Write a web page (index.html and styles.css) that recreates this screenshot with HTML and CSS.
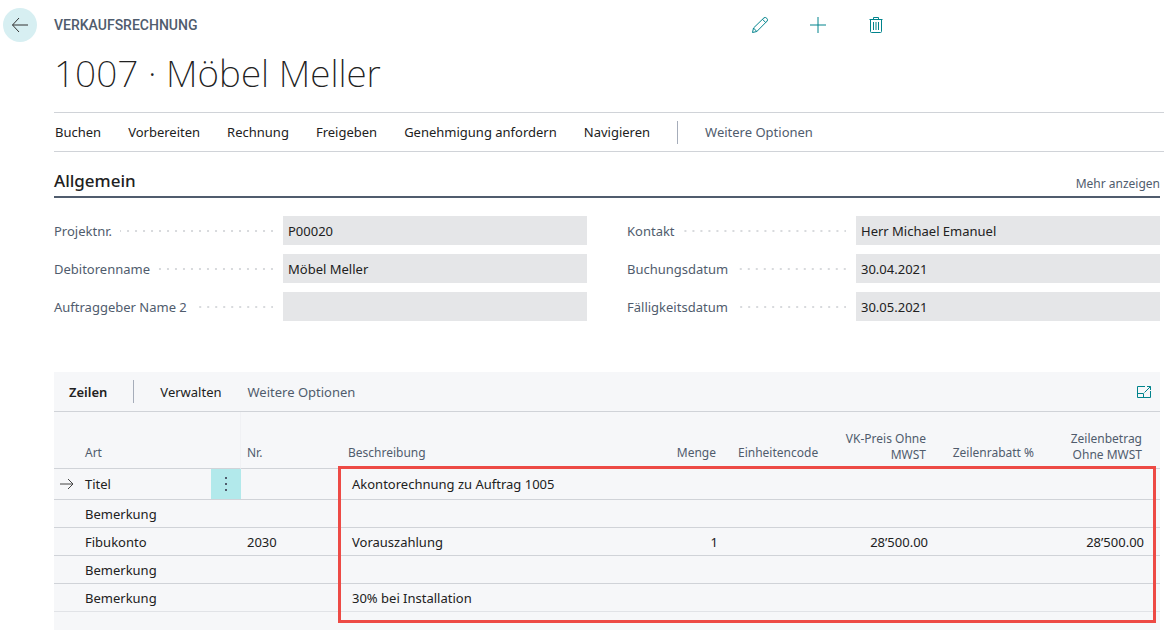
FILE: index.html
```html
<!DOCTYPE html>
<html lang="de">
	<head>
		<meta charset="UTF-8">
		<title>1007 · Möbel Meller - Verkaufsrechnung</title>
		<link rel="stylesheet" href="styles.css">
	</head>
	<body>
		<header class="header">
			<button class="back" type="button" aria-label="Zurück">
				<svg width="18" height="16" viewBox="0 0 18 16"><path d="M17 8H1.500M8 1L1.500 8L8 15"/></svg>
			</button>
			<span class="caption">VERKAUFSRECHNUNG</span>
			<div class="tools">
				<button type="button" aria-label="Bearbeiten">
					<svg width="18" height="18" viewBox="0 0 18 18"><path d="M1.500 16.500L2.500 12L13 1.800Q14.300 0.900 15.800 2.300Q17.100 3.700 16.200 5L5.800 15.500ZM2.500 12L5.800 15.500M11.500 3.300L14.700 6.500"/></svg>
				</button>
				<button type="button" aria-label="Neu">
					<svg width="18" height="18" viewBox="0 0 18 18"><path d="M9 1V17M1 9H17"/></svg>
				</button>
				<button type="button" aria-label="Löschen">
					<svg width="18" height="18" viewBox="0 0 18 18"><path d="M2.500 3.500H15.500M6.500 3.500V1.500H11.500V3.500M3.500 3.500V15.500Q3.500 16.500 4.500 16.500H13.500Q14.500 16.500 14.500 15.500V3.500M6.500 6V14M9 6V14M11.500 6V14"/></svg>
				</button>
			</div>
		</header>
		<main class="content">
			<h1>1007 · Möbel Meller</h1>
			<nav class="actions">
				<button type="button">Buchen</button>
				<button type="button">Vorbereiten</button>
				<button type="button">Rechnung</button>
				<button type="button">Freigeben</button>
				<button type="button">Genehmigung anfordern</button>
				<button type="button">Navigieren</button>
				<span class="divider"></span>
				<button type="button" class="more">Weitere Optionen</button>
			</nav>
			<section class="general">
				<div class="grouphead">
					<h2>Allgemein</h2>
					<a href="#">Mehr anzeigen</a>
				</div>
				<div class="fields">
					<div class="field">
						<label for="projektnr">Projektnr.</label>
						<input id="projektnr" type="text" value="P00020" readonly>
					</div>
					<div class="field">
						<label for="kontakt">Kontakt</label>
						<input id="kontakt" type="text" value="Herr Michael Emanuel" readonly>
					</div>
					<div class="field">
						<label for="debitor">Debitorenname</label>
						<input id="debitor" type="text" value="Möbel Meller" readonly>
					</div>
					<div class="field">
						<label for="buchung">Buchungsdatum</label>
						<input id="buchung" type="text" value="30.04.2021" readonly>
					</div>
					<div class="field">
						<label for="auftraggeber">Auftraggeber Name 2</label>
						<input id="auftraggeber" type="text" value="" readonly>
					</div>
					<div class="field">
						<label for="faellig">Fälligkeitsdatum</label>
						<input id="faellig" type="text" value="30.05.2021" readonly>
					</div>
				</div>
			</section>
			<section class="lines">
				<div class="linebar">
					<h3>Zeilen</h3>
					<span class="divider"></span>
					<button type="button">Verwalten</button>
					<button type="button" class="more">Weitere Optionen</button>
					<button type="button" class="expand" aria-label="Fokusmodus">
						<svg width="16" height="14" viewBox="0 0 16 14"><path d="M9 1.500H1.500V12.500H14.500V6M1.500 8.500H7.500V12.500M8.500 7.500L14.500 1.500M11 1.500H14.500V5"/></svg>
					</button>
				</div>
				<table>
					<colgroup>
						<col class="c-mark"><col class="c-art"><col class="c-menu"><col class="c-nr"><col>
						<col class="c-menge"><col class="c-code"><col class="c-preis"><col class="c-sum"><col class="c-sum"><col class="c-end">
					</colgroup>
					<thead>
						<tr>
							<th></th>
							<th class="art">Art</th>
							<th class="menu"></th>
							<th>Nr.</th>
							<th>Beschreibung</th>
							<th class="num">Menge</th>
							<th class="code">Einheitencode</th>
							<th class="num double">VK-Preis Ohne MWST</th>
							<th class="num">Zeilenrabatt %</th>
							<th class="num double">Zeilenbetrag Ohne MWST</th>
							<th></th>
						</tr>
					</thead>
					<tbody>
						<tr class="current">
							<td><svg class="arrow" width="14" height="12" viewBox="0 0 14 12"><path d="M0 6H13M8 1L13 6L8 11"/></svg></td>
							<td class="art">Titel</td>
							<td class="menu"><button type="button" aria-label="Weitere Optionen anzeigen"><svg width="2" height="14" viewBox="0 0 2 14"><path d="M0 0h2v2h-2zM0 6h2v2h-2zM0 12h2v2h-2z"/></svg></button></td>
							<td></td>
							<td class="desc">Akontorechnung zu Auftrag 1005</td>
							<td></td><td></td><td></td><td></td><td></td><td></td>
						</tr>
						<tr>
							<td></td>
							<td class="art">Bemerkung</td>
							<td></td><td></td><td></td><td></td><td></td><td></td><td></td><td></td><td></td>
						</tr>
						<tr>
							<td></td>
							<td class="art">Fibukonto</td>
							<td></td>
							<td>2030</td>
							<td class="desc">Vorauszahlung</td>
							<td class="num">1</td>
							<td></td>
							<td class="num">28’500.00</td>
							<td></td>
							<td class="num">28’500.00</td>
							<td></td>
						</tr>
						<tr>
							<td></td>
							<td class="art">Bemerkung</td>
							<td></td><td></td><td></td><td></td><td></td><td></td><td></td><td></td><td></td>
						</tr>
						<tr>
							<td></td>
							<td class="art">Bemerkung</td>
							<td></td><td></td>
							<td class="desc">30% bei Installation</td>
							<td></td><td></td><td></td><td></td><td></td><td></td>
						</tr>
					</tbody>
				</table>
				<div class="highlight"></div>
			</section>
		</main>
	</body>
</html>
```

FILE: styles.css
```css
* {
	box-sizing: border-box;
}
body {
	display: flex;
	flex-direction: column;
	min-height: 100vh;
	margin: 0;
	background-color: #fff;
	color: #212121;
	font-family: "Segoe UI", "Noto Sans", "Open Sans", sans-serif;
	font-size: 13px;
	line-height: 20px;
}
button {
	padding: 0;
	border: none;
	background-color: transparent;
	color: inherit;
	font: inherit;
	white-space: nowrap;
	cursor: pointer;
}
svg {
	display: block;
	fill: none;
	stroke: #00838c;
}
h1, h2, h3 {
	margin: 0;
}

.header {
	display: flex;
	align-items: center;
	height: 50px;
	padding-left: 3px;
}
.back {
	display: grid;
	place-items: center;
	width: 34px;
	height: 34px;
	margin-right: 17px;
	border-radius: 50%;
	background-color: #d7eff2;
}
.back svg {
	stroke: #333;
}
.caption {
	color: #505c6d;
	font-family: Roboto, sans-serif;
	font-size: 14px;
	font-weight: 500;
}
.tools {
	display: flex;
	gap: 40px;
	margin-left: auto;
	margin-right: 279px;
}

.content {
	display: flex;
	flex: 1;
	flex-direction: column;
	padding-left: 54px;
}
h1 {
	height: 62px;
	font-size: 37px;
	font-weight: 200;
	line-height: 46px;
}
.actions {
	display: flex;
	align-items: center;
	gap: 27px;
	height: 40px;
	padding-left: 1px;
	border-top: 1px solid #d0d3d8;
	border-bottom: 1px solid #d0d3d8;
}
.divider {
	width: 1px;
	height: 23px;
	background-color: #a6adba;
}
.more {
	color: #505c6d;
}

.general {
	padding-right: 4px;
}
.grouphead {
	display: flex;
	align-items: flex-end;
	justify-content: space-between;
	height: 46px;
	border-bottom: 2px solid #505c6d;
}
.grouphead h2 {
	font-size: 17px;
	font-weight: 500;
	line-height: 30px;
}
.grouphead a {
	color: #505c6d;
	font-size: 12px;
	line-height: 24px;
	text-decoration: none;
}
.fields {
	display: grid;
	grid-template-columns: 1fr 1fr;
	gap: 9px 40px;
	padding: 18px 0 51px;
}
.field {
	display: grid;
	grid-template-columns: 229px 1fr;
	align-items: center;
}
.field label {
	display: flex;
	align-items: center;
	padding-right: 10px;
	color: #505c6d;
	white-space: nowrap;
}
.field label::after {
	content: "";
	flex: 1;
	height: 2px;
	margin-left: 8px;
	background: linear-gradient(to right, transparent 6px, #d8dadd 6px) right / 8px 2px repeat-x;
}
.field input {
	width: 100%;
	height: 29px;
	padding: 0 5px;
	border: none;
	border-radius: 0;
	background-color: #e5e6e8;
	color: #212121;
	font: inherit;
}

.lines {
	position: relative;
	flex: 1;
	margin-right: 4px;
	background-color: #f6f7f9;
}
.linebar {
	display: flex;
	align-items: center;
	gap: 26px;
	height: 40px;
	padding: 0 8px 0 15px;
	border-bottom: 1px solid #d0d3d8;
}
.linebar h3 {
	font-size: 13px;
	font-weight: 600;
}
.linebar .expand {
	margin-left: auto;
}
table {
	width: 100%;
	border-collapse: separate;
	border-spacing: 0;
	table-layout: fixed;
}
.c-mark, .c-menu {
	width: 30px;
}
.c-art {
	width: 127px;
}
.c-nr {
	width: 101px;
}
.c-menge {
	width: 90px;
}
.c-code {
	width: 110px;
}
.c-preis {
	width: 100px;
}
.c-sum {
	width: 108px;
}
.c-end {
	width: 12px;
}
th {
	height: 57px;
	padding: 0 6px 7px;
	border-bottom: 1px solid #d0d3d8;
	color: #505c6d;
	font-size: 12px;
	font-weight: normal;
	line-height: 16px;
	text-align: left;
	vertical-align: bottom;
}
th.art, td.art {
	padding-left: 1px;
}
th.menu {
	border-right: 1px solid #f0f1f4;
}
th.code {
	padding-left: 16px;
}
th.num, td.num {
	text-align: right;
}
th.double {
	padding-left: 8px;
	padding-bottom: 5px;
}
td {
	height: 28px;
	padding: 0 6px;
	border-bottom: 1px solid #d0d3d8;
	white-space: nowrap;
}
td.num {
	padding-right: 4px;
}
td.desc {
	padding-left: 10px;
}
tr.current td {
	height: 31px;
}
tr:last-child td {
	border-bottom-color: #e1e3e7;
}
td .arrow {
	stroke: #444;
}
tr.current td.menu {
	padding: 0;
}
td.menu button {
	display: grid;
	place-items: center;
	width: 30px;
	height: 30px;
	background-color: #b2e9eb;
}
td.menu svg {
	fill: #505c6d;
	stroke: none;
}
/* marks the line columns of the invoice */
.highlight {
	position: absolute;
	top: 94px;
	right: 4px;
	left: 284px;
	height: 157px;
	border: 3px solid #ed4a45;
	pointer-events: none;
}
```
